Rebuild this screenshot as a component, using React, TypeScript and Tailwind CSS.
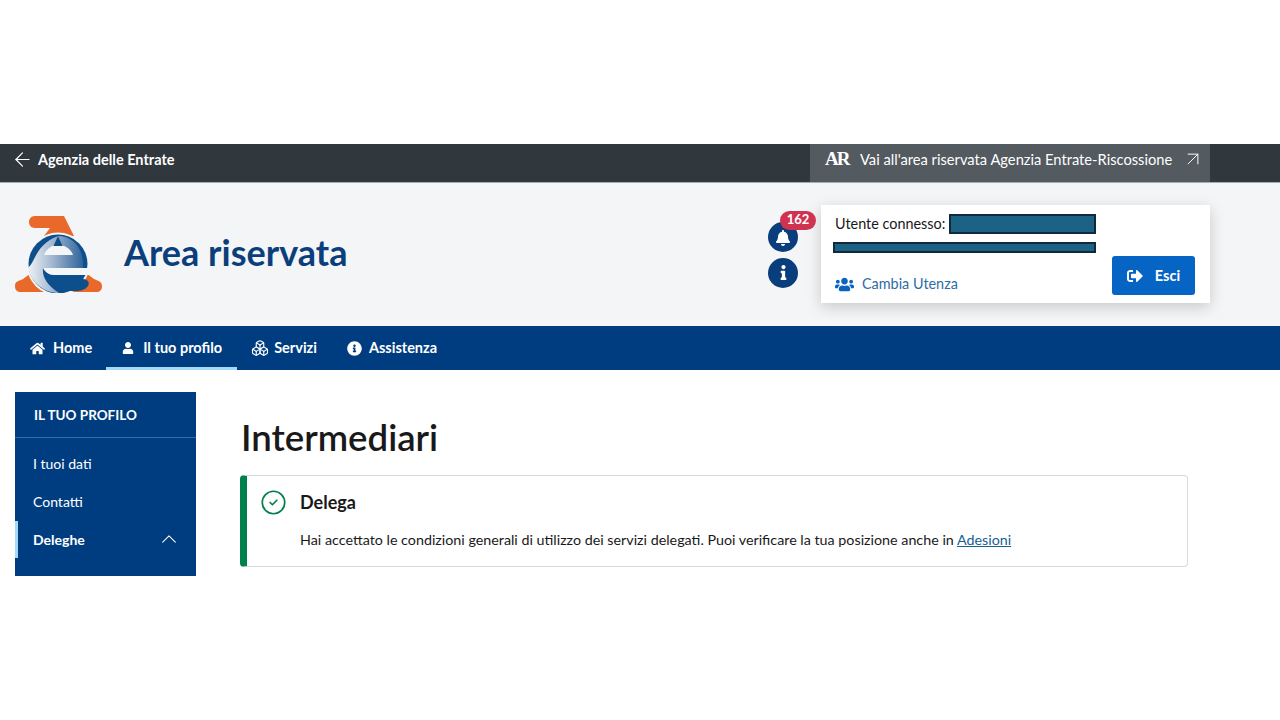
import { ArrowLeft, ArrowUpRight, Boxes, ChevronUp, CircleCheck } from "lucide-react";
import { FaBell, FaHome, FaInfo, FaInfoCircle, FaSignOutAlt, FaUser, FaUsers } from "react-icons/fa";

const font = { fontFamily: '"Lato", "Noto Sans", sans-serif' };

function Logo() {
  return (
    <svg width="88" height="78" viewBox="0 0 88 78" className="shrink-0">
      <defs>
        <linearGradient id="ring" x1="0" y1="0" x2="1" y2="0">
          <stop offset="0" stopColor="#eef1f5" />
          <stop offset="0.4" stopColor="#a9bcd3" />
          <stop offset="1" stopColor="#2f639a" />
        </linearGradient>
      </defs>
      {/* orange A */}
      <path d="M20 1H49L59 21H29L35 13H20C12 13 12 1 20 1Z" fill="#e8692a" />
      <path d="M0 71C0 66 4 66 8 64L16 58H30L30 77H6C2 77 0 75 0 71Z" fill="#e8692a" />
      <path d="M54 58H71L79 64C84 66 87 67 87 71C87 75 85 77 81 77H54Z" fill="#e8692a" />
      {/* circle */}
      <circle cx="43" cy="49" r="31.5" fill="#f4f5f7" />
      <circle cx="43" cy="49" r="29.5" fill="#0d4f8c" />
      {/* e */}
      <path d="M43 21C58 21 69 33 68 53H28C27 62 32 70 44 78C30 78 15 68 13.5 52C20 48 20 30 43 21Z" fill="url(#ring)" />
      <path d="M29 40C32 33 37 30 43 30C50 30 56 34 58 40Z" fill="#f4f5f7" />
      <path d="M43 21L47.5 31H38.5Z" fill="#0d4f8c" />
      <path d="M28 53H76V60H38C34 60 30 57 28 53Z" fill="#f4f5f7" />
      <path d="M31 60C36 63 40 64 46 64H68C73 64 75 68 73 71C70 75 66 76 60 76H50C42 76 35 69 31 60Z" fill="#0d4f8c" />
    </svg>
  );
}

const navItems = [
  { label: "Home", icon: <FaHome size={15} />, active: false, cls: "pr-[14px] gap-[8px]" },
  { label: "Il tuo profilo", icon: <FaUser size={12} />, active: true, cls: "pl-[16px] pr-[15px] gap-[9px]" },
  { label: "Servizi", icon: <Boxes size={18} strokeWidth={1.5} />, active: false, cls: "pl-[14px] pr-[15px] gap-[5px]" },
  { label: "Assistenza", icon: <FaInfoCircle size={15} />, active: false, cls: "px-[15px] gap-[7px]" },
];

export default function App() {
  return (
    <div className="min-h-[720px] bg-white pt-[144px] text-[#19191a]" style={font}>
      {/* Top slim bar */}
      <div className="flex h-[39px] items-start justify-between border-b border-[#a9acaf] bg-[#30373d] pl-[15px] pr-[70px] text-white">
        <a className="flex h-[31px] items-center gap-[8px] text-[14.5px] font-bold">
          <ArrowLeft size={15} strokeWidth={1.25} className="scale-[1.5]" />
          Agenzia delle Entrate
        </a>
        <a className="flex h-[38px] w-[400px] items-start gap-[7px] bg-[#535a60] pl-[15px] pt-[5px] text-[14.7px]">
          <span className="w-[28px] text-[19px] font-bold leading-[20px] tracking-[-2px]" style={{ fontFamily: '"Liberation Serif", serif' }}>
            AR
          </span>
          <span className="leading-[21px]">Vai all'area riservata Agenzia Entrate-Riscossione</span>
          <ArrowUpRight size={18} strokeWidth={1} className="ml-[5px] mt-[1px] scale-[1.3]" />
        </a>
      </div>

      {/* Header */}
      <div className="flex h-[143px] items-center bg-[#f4f5f7] pl-[15px] pr-[70px]">
        <div className="mt-[-1px] flex items-center gap-[21px]">
          <Logo />
          <span className="mt-[-4px] text-[36px] font-bold leading-none text-[#0b3f7c]">Area riservata</span>
        </div>
        <div className="ml-auto flex flex-col gap-[6px]">
          <div className="relative flex h-[30px] w-[30px] items-center justify-center rounded-full bg-[#0a3d7c] pt-[2px] text-white">
            <FaBell size={16} />
            <span className="absolute left-[12px] top-[-11px] flex h-[19px] w-[36px] items-center justify-center rounded-full bg-[#cf3350] text-[13px] font-bold">
              162
            </span>
          </div>
          <div className="flex h-[30px] w-[30px] items-center justify-center rounded-full bg-[#0a3d7c] text-white">
            <FaInfo size={15} />
          </div>
        </div>
        <div className="ml-[23px] mt-[-1px] flex h-[98px] w-[389px] flex-col bg-white pl-[12px] pr-[15px] pt-[8px] shadow-[0_4px_14px_rgba(0,0,0,0.18)]">
          <div className="flex h-[22px] items-center gap-[4px] pl-[2px] text-[14.4px]">
            <span>Utente connesso:</span>
            <span className="h-[20px] w-[147px] border-2 border-[#0e2a3c] bg-[#1b6285]" />
          </div>
          <div className="mt-[7px] h-[11px] w-[263px] border-2 border-[#0e2a3c] bg-[#1b6285]" />
          <div className="mt-[3px] flex items-end justify-between">
            <a className="flex items-center gap-[8px] pl-[2px] text-[14.4px] text-[#2c6ea5]">
              <FaUsers size={19} className="text-[#0b63c0]" />
              Cambia Utenza
            </a>
            <button className="flex h-[39px] w-[83px] items-center justify-center gap-[12px] rounded-[3px] bg-[#0664c4] text-[14.5px] font-bold text-white">
              <FaSignOutAlt size={16} />
              Esci
            </button>
          </div>
        </div>
      </div>

      {/* Nav */}
      <nav className="flex h-[44px] items-stretch bg-[#003d80] pl-[30px] text-[14.5px] font-bold text-white">
        {navItems.map((item) => (
          <a
            key={item.label}
            className={`flex items-center border-b-[3px] pt-[3px] ${item.cls} ${
              item.active ? "border-[#a6d8f7]" : "border-transparent"
            }`}
          >
            {item.icon}
            {item.label}
          </a>
        ))}
      </nav>

      {/* Content */}
      <div className="flex pl-[15px]">
        <aside className="mt-[22px] h-[184px] w-[181px] bg-[#003d80] text-[14px] text-white">
          <div className="flex h-[46px] items-center border-b border-[#3a6aa2] pl-[19px] pt-[1px] text-[13.5px] font-bold">IL TUO PROFILO</div>
          <div className="mt-[6px] flex h-[38px] items-center pl-[18px]">I tuoi dati</div>
          <div className="flex h-[38px] items-center pl-[18px]">Contatti</div>
          <div className="mt-[1px] flex h-[37px] items-center justify-between border-l-[3px] border-[#a6d8f7] pb-[1px] pl-[15px] pr-[18px] font-bold">
            Deleghe
            <ChevronUp size={18} strokeWidth={1} className="scale-[1.4]" />
          </div>
        </aside>

        <main className="ml-[44px] w-[948px]">
          <h1 className="mt-[43px] pl-[1px] text-[36.6px] font-semibold leading-[48px]">Intermediari</h1>
          <div className="mt-[14px] h-[92px] rounded-[4px] border border-l-[7px] border-[#d9dadb] border-l-[#00804d] pl-[13px] pt-[12px]">
            <div className="flex items-center gap-[13px]">
              <CircleCheck size={27} strokeWidth={1.5} className="text-[#00804d]" />
              <span className="text-[18px] font-bold leading-[28px]">Delega</span>
            </div>
            <p className="mt-[13px] pl-[40px] text-[14.3px] leading-[22px]">
              Hai accettato le condizioni generali di utilizzo dei servizi delegati. Puoi verificare la tua posizione anche in{" "}
              <a className="text-[#17608f] underline">Adesioni</a>
            </p>
          </div>
        </main>
      </div>
    </div>
  );
}
